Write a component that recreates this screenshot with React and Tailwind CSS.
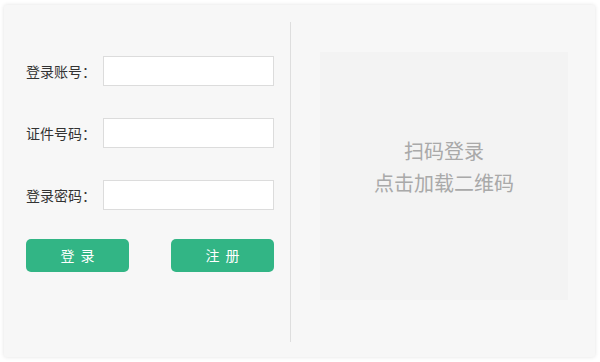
export default function App() {
  const fields = ['登录账号：', '证件号码：', '登录密码：']

  return (
    <div
      className="h-[362px] w-[600px] bg-white pl-1 pt-[5px]"
      style={{ fontFamily: '"Noto Sans CJK SC", "Noto Sans", sans-serif' }}
    >
      <div className="flex h-[352px] w-[591px] rounded-[3px] bg-[#f7f7f7] shadow-[0_0_4px_rgba(0,0,0,0.12)]">
        <div className="w-[286px] pl-[22px] pt-[51px]">
          <div className="flex flex-col gap-8">
            {fields.map((label) => (
              <div key={label} className="flex items-center">
                <span className="w-[77px] text-[14px] text-[#333]">{label}</span>
                <input className="h-[30px] w-[171px] border border-[#dcdcdc] bg-white outline-none" />
              </div>
            ))}
          </div>
          <div className="mt-[29px] flex w-[248px] justify-between">
            <button className="h-[33px] w-[103px] rounded-[5px] bg-[#32b585] pl-[6px] text-[14px] tracking-[6px] text-white">
              登录
            </button>
            <button className="h-[33px] w-[103px] rounded-[5px] bg-[#32b585] pl-[6px] text-[14px] tracking-[6px] text-white">
              注册
            </button>
          </div>
        </div>
        <div className="mt-[17px] mb-[15px] w-px bg-[#dedede]" />
        <div className="pl-[29px] pt-[47px]">
          <div className="flex h-[248px] w-[248px] flex-col items-center justify-center bg-[#f3f3f3] pb-[18px] text-[20px] leading-[32px] text-[#a9a9a9]">
            <span>扫码登录</span>
            <span>点击加载二维码</span>
          </div>
        </div>
      </div>
    </div>
  )
}
